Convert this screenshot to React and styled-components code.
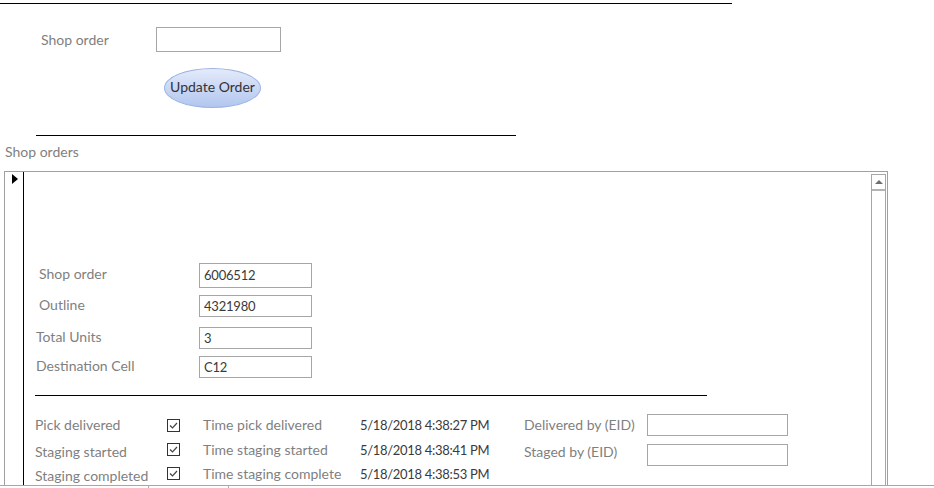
import React from "react";
import styled, { createGlobalStyle } from "styled-components";

const GlobalStyle = createGlobalStyle`
  html, body {
    margin: 0;
    padding: 0;
    background: #fff;
  }
  body {
    font-family: Lato, "Open Sans", "Liberation Sans", sans-serif;
    font-size: 14px;
  }
`;

const Page = styled.div`
  width: 934px;
  height: 488px;
  overflow: hidden;
  display: flex;
  flex-direction: column;
`;

const Rule = styled.div`
  height: 1px;
  background: #000;
  width: ${(p) => p.$width}px;
  margin-top: ${(p) => p.$top}px;
  margin-left: ${(p) => p.$left || 0}px;
  flex-shrink: 0;
`;

const Label = styled.span`
  color: #7f7f7f;
  line-height: 18px;
  white-space: nowrap;
`;

const HeaderRow = styled.div`
  display: flex;
  align-items: center;
  margin-top: 23px;
  padding-left: 41px;
`;

const HeaderLabel = styled(Label)`
  width: 115px;
`;

const TextBox = styled.div`
  box-sizing: border-box;
  width: ${(p) => p.$width}px;
  height: ${(p) => p.$height || 22}px;
  border: 1px solid #a6a6a6;
  background: #fff;
  color: #3a3a3a;
  font-size: 13px;
  letter-spacing: -0.2px;
  padding: 0 4px;
  display: flex;
  align-items: center;
  line-height: 1;
`;

const OvalButton = styled.button`
  box-sizing: border-box;
  width: 97px;
  height: 40px;
  margin: 16px 0 0 164px;
  border-radius: 50%;
  border: 1px solid #9cb3e2;
  background: linear-gradient(#e3eafa, #b2c6ef);
  color: #333;
  font: inherit;
  font-size: 14px;
  padding: 0 0 3px;
  cursor: pointer;
`;

const Caption = styled(Label)`
  display: block;
  margin: 7px 0 0 5px;
`;

const Subform = styled.div`
  box-sizing: border-box;
  width: 884px;
  margin: 10px 0 0 4px;
  flex: 1;
  min-height: 0;
  border: 1px solid #a0a0a0;
  border-bottom: none;
  display: flex;
`;

const Selector = styled.div`
  width: 18px;
  border-right: 1px solid #000;
  display: flex;
  justify-content: center;
  padding-top: 2px;
`;

const Arrow = styled.div`
  width: 0;
  height: 0;
  margin-left: 2px;
  border-top: 5px solid transparent;
  border-bottom: 5px solid transparent;
  border-left: 6px solid #000;
`;

const Body = styled.div`
  flex: 1;
  padding-top: 91px;
  display: flex;
  flex-direction: column;
`;

const FieldRow = styled.div`
  display: grid;
  grid-template-columns: 175px 113px;
  align-items: center;
  margin-top: ${(p) => p.$top}px;
`;

const FieldLabel = styled(Label)`
  padding-left: ${(p) => p.$indent}px;
  margin-bottom: 3px;
`;

const StatusGrid = styled.div`
  display: grid;
  grid-template-columns: 132px 36px 157px 164px 123px 141px;
  grid-template-rows: 26px 24px 24px;
  align-items: center;
  margin: 16px 0 0 11px;
`;

const StatusLabel = styled(Label)`
  margin-top: ${(p) => p.$drop || 0}px;
`;

const DateText = styled.span`
  color: #3a3a3a;
  white-space: nowrap;
  line-height: 18px;
  font-size: 13px;
  letter-spacing: -0.3px;
`;

const CheckBox = styled.span`
  box-sizing: border-box;
  width: 13px;
  height: 13px;
  border: 1px solid #333;
  display: flex;
  align-items: center;
  justify-content: center;
  margin-top: ${(p) => p.$drop || 0}px;
`;

const EidBox = styled(TextBox)`
  margin-top: ${(p) => p.$drop || 0}px;
`;

const ScrollBar = styled.div`
  box-sizing: border-box;
  width: 15px;
  margin: 2px 1px 0 0;
  border: 1px solid #a6a6a6;
  border-bottom: none;
`;

const ScrollButton = styled.div`
  height: 14px;
  border-bottom: 2px solid #b4b4b4;
  display: flex;
  align-items: center;
  justify-content: center;
`;

const UpArrow = styled.div`
  width: 0;
  height: 0;
  border-left: 4px solid transparent;
  border-right: 4px solid transparent;
  border-bottom: 4px solid #6e6e6e;
`;

const StatusBar = styled.div`
  height: 2px;
  flex-shrink: 0;
  border-top: 1px solid #a6a6a6;
  display: flex;
  padding-left: 148px;
`;

const Tick = styled.div`
  width: 1px;
  background: #b0b0b0;
  margin-right: ${(p) => p.$gap || 0}px;
`;

const Check = () => (
  <svg width="9" height="7" viewBox="0 0 9 7">
    <path d="M1 3.5 L3.5 6 L8 1" fill="none" stroke="#444" strokeWidth="1.2" />
  </svg>
);

const fields = [
  { label: "Shop order", value: "6006512", indent: 15, top: 0, height: 25 },
  { label: "Outline", value: "4321980", indent: 15, top: 7, height: 22 },
  { label: "Total Units", value: "3", indent: 12, top: 10, height: 22 },
  { label: "Destination Cell", value: "C12", indent: 12, top: 7, height: 22 },
];

const steps = [
  { label: "Pick delivered", time: "Time pick delivered", stamp: "5/18/2018 4:38:27 PM", eid: "Delivered by (EID)", drop: 0, box: 0 },
  { label: "Staging started", time: "Time staging started", stamp: "5/18/2018 4:38:41 PM", eid: "Staged by (EID)", drop: 4, box: 10 },
  { label: "Staging completed", time: "Time staging complete", stamp: "5/18/2018 4:38:53 PM", drop: 4 },
];

export default function App() {
  return (
    <Page>
      <GlobalStyle />
      <Rule $top={3} $width={732} />
      <HeaderRow>
        <HeaderLabel>Shop order</HeaderLabel>
        <TextBox $width={125} $height={25} />
      </HeaderRow>
      <div>
        <OvalButton>Update Order</OvalButton>
      </div>
      <Rule $top={27} $left={36} $width={480} />
      <Caption>Shop orders</Caption>
      <Subform>
        <Selector>
          <Arrow />
        </Selector>
        <Body>
          {fields.map((f) => (
            <FieldRow key={f.label} $top={f.top}>
              <FieldLabel $indent={f.indent}>{f.label}</FieldLabel>
              <TextBox $width={113} $height={f.height}>{f.value}</TextBox>
            </FieldRow>
          ))}
          <Rule $top={17} $left={11} $width={672} />
          <StatusGrid>
            {steps.map((s) => (
              <React.Fragment key={s.label}>
                <StatusLabel $drop={s.drop}>{s.label}</StatusLabel>
                <CheckBox $drop={s.drop ? -2 : 0}>
                  <Check />
                </CheckBox>
                <Label>{s.time}</Label>
                <DateText>{s.stamp}</DateText>
                {s.eid ? <StatusLabel $drop={s.drop}>{s.eid}</StatusLabel> : <span />}
                {s.eid ? <EidBox $width={141} $height={22} $drop={s.box} /> : <span />}
              </React.Fragment>
            ))}
          </StatusGrid>
        </Body>
        <ScrollBar>
          <ScrollButton>
            <UpArrow />
          </ScrollButton>
        </ScrollBar>
      </Subform>
      <StatusBar>
        <Tick $gap={79} />
        <Tick />
      </StatusBar>
    </Page>
  );
}
